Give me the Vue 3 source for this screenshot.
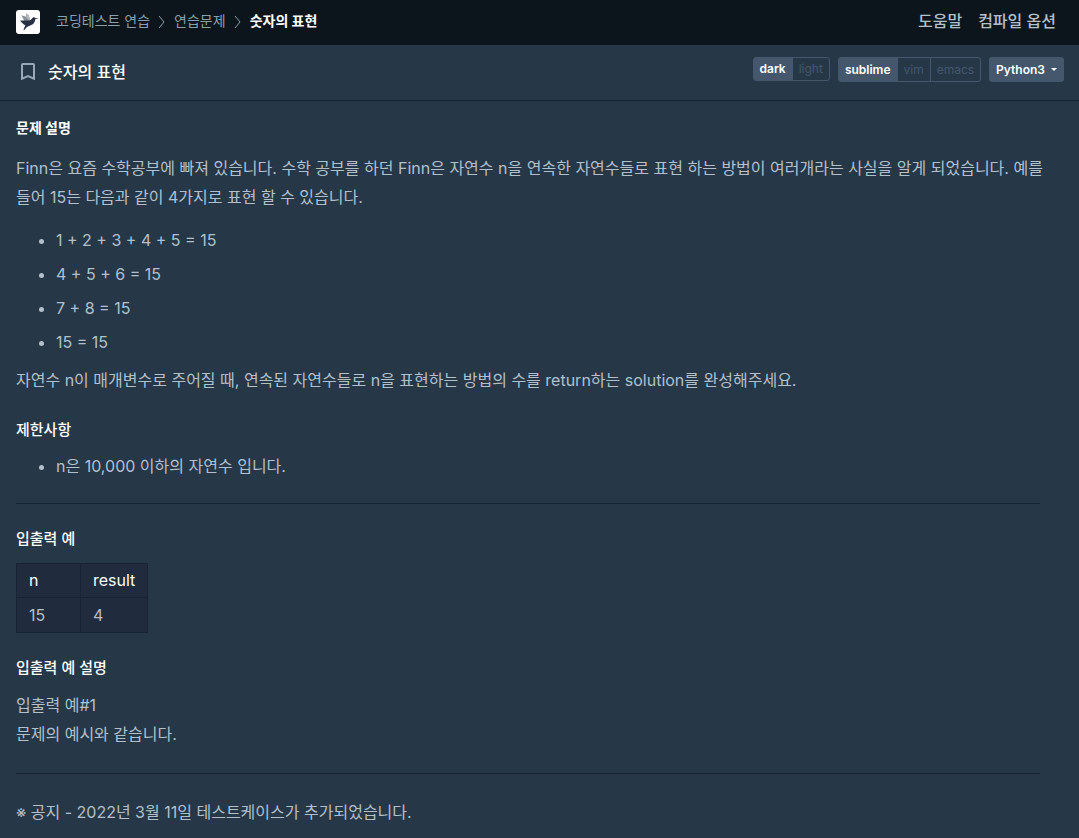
<script setup>
import { ref } from 'vue'

const theme = ref('dark')
const keymap = ref('sublime')
const themes = ['dark', 'light']
const keymaps = ['sublime', 'vim', 'emacs']
const sums = ['1 + 2 + 3 + 4 + 5 = 15', '4 + 5 + 6 = 15', '7 + 8 = 15', '15 = 15']
</script>

<template>
  <div class="page">
    <header class="navbar">
      <a class="logo" href="#" aria-label="홈">
        <svg width="24" height="24" viewBox="0 0 24 24" aria-hidden="true">
          <rect width="24" height="24" rx="3" fill="#fff" />
          <path d="M10.4 3.2 12.8 5.4 14.4 10.6 9.6 11.2Z" fill="#9097a1" />
          <path d="M5.4 5.2 9.4 6.4 13.4 10.8 8.6 11.4Z" fill="#8a919b" />
          <path d="M10.4 3.2 10.4 7.4 14 11 12.8 5.4Z" fill="#b4b9c0" />
          <path d="M4.2 10.6 12.2 10.4C14 10.4 15 9.8 16 8.4 17 7.2 18.4 7 19.4 7.9L23 8.6 19.4 9.1C19 11 18.6 12.6 17.2 14 15.6 15.4 12.8 15.6 11 17 9.8 18 9 19.4 7.6 20.6 7.6 18.8 8.4 17 9.4 15.4 7.4 14.4 5.4 12.6 4.2 10.6Z" fill="#263143" />
        </svg>
      </a>
      <nav class="crumbs" aria-label="경로">
        <a href="#">코딩테스트 연습</a>
        <svg class="chevron" width="8" height="14" viewBox="0 0 8 14" aria-hidden="true"><path d="M1 2 6 8 1 14" /></svg>
        <a href="#">연습문제</a>
        <svg class="chevron" width="8" height="14" viewBox="0 0 8 14" aria-hidden="true"><path d="M1 2 6 8 1 14" /></svg>
        <a class="current" href="#" aria-current="page">숫자의 표현</a>
      </nav>
      <nav class="links" aria-label="메뉴">
        <a href="#">도움말</a>
        <a href="#">컴파일 옵션</a>
      </nav>
    </header>

    <div class="toolbar">
      <button class="bookmark" type="button" aria-label="북마크">
        <svg width="16" height="19" viewBox="0 0 16 19" aria-hidden="true"><path d="M2 16.7V3Q2 2 3 2H13Q14 2 14 3V16.7L8 14.2Z" /></svg>
      </button>
      <h1>숫자의 표현</h1>
      <div class="tools">
        <div class="group theme" role="group" aria-label="테마">
          <button v-for="t in themes" :key="t" type="button" :class="{ active: theme === t }" :aria-pressed="theme === t" @click="theme = t">{{ t }}</button>
        </div>
        <div class="group" role="group" aria-label="키맵">
          <button v-for="k in keymaps" :key="k" type="button" :class="{ active: keymap === k }" :aria-pressed="keymap === k" @click="keymap = k">{{ k }}</button>
        </div>
        <button class="language" type="button" aria-haspopup="listbox">Python3<span class="caret"></span></button>
      </div>
    </div>

    <main class="content">
      <h2>문제 설명</h2>
      <p>Finn은 요즘 수학공부에 빠져 있습니다. 수학 공부를 하던 Finn은 자연수 n을 연속한 자연수들로 표현 하는 방법이 여러개라는 사실을 알게 되었습니다. 예를 들어 15는 다음과 같이 4가지로 표현 할 수 있습니다.</p>
      <ul class="sums">
        <li v-for="s in sums" :key="s">{{ s }}</li>
      </ul>
      <p>자연수 n이 매개변수로 주어질 때, 연속된 자연수들로 n을 표현하는 방법의 수를 return하는 solution를 완성해주세요.</p>
      <h3>제한사항</h3>
      <ul>
        <li>n은 10,000 이하의 자연수 입니다.</li>
      </ul>
      <hr />
      <h3>입출력 예</h3>
      <table>
        <thead>
          <tr><th scope="col">n</th><th scope="col">result</th></tr>
        </thead>
        <tbody>
          <tr><td>15</td><td>4</td></tr>
        </tbody>
      </table>
      <h3>입출력 예 설명</h3>
      <p class="example">입출력 예#1<br />문제의 예시와 같습니다.</p>
      <hr class="notice-rule" />
      <p>※ 공지 - 2022년 3월 11일 테스트케이스가 추가되었습니다.</p>
    </main>
  </div>
</template>

<style>
body {
  background: #263747;
}
</style>

<style scoped>
.page {
  color: #b2c0cc;
  font: 16px/29px Inter, "Noto Sans CJK KR", sans-serif;
}
.page * {
  box-sizing: border-box;
}
a {
  color: inherit;
  text-decoration: none;
}
button {
  border: 0;
  padding: 0;
  background: none;
  font: inherit;
  color: inherit;
  cursor: pointer;
}
svg {
  display: block;
}
.navbar {
  display: flex;
  align-items: center;
  height: 45px;
  padding: 0 23px 2px 16px;
  background: #0c151c;
}
.crumbs {
  display: flex;
  align-items: center;
  gap: 8px;
  margin-left: 16px;
  padding-bottom: 2px;
  font-size: 14px;
  line-height: 20px;
  color: #8a9fac;
}
.crumbs .current {
  color: #fff;
  font-weight: 700;
}
.chevron path {
  fill: none;
  stroke: #8a9fac;
}
.links {
  display: flex;
  gap: 16px;
  margin-left: auto;
  padding-bottom: 2px;
  font-weight: 500;
  line-height: 24px;
}
.toolbar {
  display: flex;
  align-items: center;
  height: 56px;
  padding: 0 15px 0 20px;
  border-bottom: 1px solid #172334;
}
.bookmark {
  padding-bottom: 2px;
}
.bookmark path {
  fill: none;
  stroke: #98a8b9;
  stroke-width: 2;
}
h1 {
  margin: 0 0 0 12px;
  padding-bottom: 2px;
  color: #fff;
  font-size: 16px;
  font-weight: 500;
  line-height: 24px;
}
.tools {
  display: flex;
  gap: 8px;
  margin-left: auto;
  padding-bottom: 6px;
  font-size: 12px;
  line-height: 22px;
}
.group {
  display: flex;
  border: 1px solid #44576c;
  border-radius: 3px;
}
.group button {
  padding: 0 6px;
  color: #44576c;
}
.group button + button {
  border-left: 1px solid #44576c;
}
.group .active {
  background: #44576c;
  color: #fff;
  font-weight: 600;
}
.theme {
  margin-bottom: 1px;
}
.language {
  display: flex;
  align-items: center;
  padding: 0 7px;
  border-radius: 3px;
  background: #44576c;
  color: #fff;
  font-weight: 600;
}
.caret {
  margin-left: 6px;
  border: 3px solid transparent;
  border-top-color: #fff;
  border-bottom: 0;
}
.content {
  padding: 16px 24px 11px 16px;
}
h2,
h3 {
  margin: 0;
  color: #fff;
  line-height: 22px;
}
h2 {
  margin-bottom: 15px;
  font-size: 14px;
  font-weight: 700;
}
h3 {
  margin-top: 24px;
  font-size: 15px;
  font-weight: 500;
}
p {
  margin: 0;
  word-break: keep-all;
}
.example {
  margin-top: 12px;
}
ul {
  margin: 11px 0 0;
  padding-left: 40px;
}
.sums {
  margin: 14px 0 9px;
}
.sums li + li {
  margin-top: 5px;
}
hr {
  height: 1px;
  margin: 22px 15px 24px 0;
  border: 0;
  background: #172334;
}
.notice-rule {
  margin-top: 24px;
}
table {
  margin-top: 13px;
  border-collapse: collapse;
  background: #202b3d;
  line-height: 24px;
}
th,
td {
  min-width: 64px;
  padding: 5px 12px;
  border: 1px solid #172334;
  text-align: left;
  font-weight: 400;
}
th {
  color: #fff;
  line-height: 23px;
}
</style>
